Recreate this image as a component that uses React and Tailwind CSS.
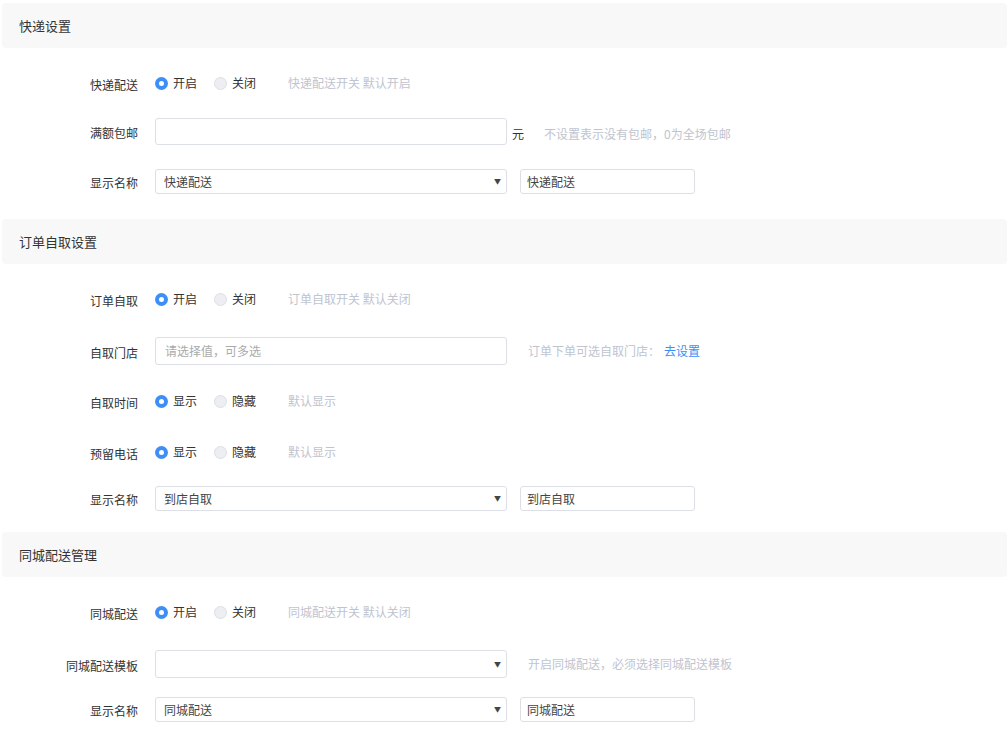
const Radio = ({ checked, label }) => (
    <label className="flex items-center">
        {checked ? (
            <span className="w-[13px] h-[13px] rounded-full bg-[#3e8ef7] flex items-center justify-center">
                <span className="w-[5px] h-[5px] rounded-full bg-white" />
            </span>
        ) : (
            <span className="w-[13px] h-[13px] rounded-full bg-[#eceef2] border border-[#dcdfe6]" />
        )}
        <span className="ml-[5px] text-[#333]">{label}</span>
    </label>
);

const Header = ({ title, className = "" }) => (
    <div className={`h-[45px] bg-[#f8f8f8] rounded-[4px] flex items-center pl-[17px] text-[13px] text-[#333] ${className}`}>
        {title}
    </div>
);

const Row = ({ label, className = "", children }) => (
    <div className={`flex items-center ${className}`}>
        <div className="w-[136px] text-right text-[#333] pt-[3px]">{label}</div>
        <div className="ml-[17px] flex items-center">{children}</div>
    </div>
);

const RadioRow = ({ label, on, off, hint, className }) => (
    <Row label={label} className={`h-[30px] ${className}`}>
        <Radio checked label={on} />
        <div className="ml-[17px]">
            <Radio label={off} />
        </div>
        <span className="ml-[32px] text-[#c0c4cf]">{hint}</span>
    </Row>
);

const Select = ({ value, h = "h-[25px]" }) => (
    <div className={`w-[352px] ${h} border border-[#dcdfe6] rounded-[3px] flex items-center justify-between pl-[8px] pr-[5px] text-[#444]`}>
        <span>{value}</span>
        <span className="text-[7px] text-[#444]">▼</span>
    </div>
);

const TextBox = ({ value }) => (
    <div className="ml-[13px] w-[175px] h-[25px] border border-[#dcdfe6] rounded-[3px] flex items-center pl-[6px] text-[#444]">
        {value}
    </div>
);

const NameRow = ({ value, className }) => (
    <Row label="显示名称" className={className}>
        <Select value={value} />
        <TextBox value={value} />
    </Row>
);

const App = () => {
    return (
        <div className="w-[1008px] h-[743px] bg-white pl-[2px] pr-[1px] text-[12px] overflow-hidden" style={{ fontFamily: '"Noto Sans CJK SC", "Noto Sans", sans-serif' }}>
            <Header title="快递设置" className="mt-[3px]" />
            <RadioRow label="快递配送" on="开启" off="关闭" hint="快递配送开关 默认开启" className="mt-[20px]" />
            <Row label="满额包邮" className="mt-[20px]">
                <div className="w-[352px] h-[27px] border border-[#dcdfe6] rounded-[3px]" />
                <span className="ml-[5px] pt-[5px] text-[#333]">元</span>
                <span className="ml-[20px] pt-[5px] text-[#c0c4cf]">不设置表示没有包邮，0为全场包邮</span>
            </Row>
            <NameRow value="快递配送" className="mt-[24px]" />

            <Header title="订单自取设置" className="mt-[25px]" />
            <RadioRow label="订单自取" on="开启" off="关闭" hint="订单自取开关 默认关闭" className="mt-[20px]" />
            <Row label="自取门店" className="mt-[23px]">
                <div className="w-[352px] h-[28px] border border-[#dcdfe6] rounded-[3px] flex items-center pl-[9px] text-[#aaa]">
                    请选择值，可多选
                </div>
                <span className="ml-[21px] text-[#c0c4cf]">订单下单可选自取门店：</span>
                <span className="ml-[4px] text-[#3e8ef7]">去设置</span>
            </Row>
            <RadioRow label="自取时间" on="显示" off="隐藏" hint="默认显示" className="mt-[21px]" />
            <RadioRow label="预留电话" on="显示" off="隐藏" hint="默认显示" className="mt-[21px]" />
            <NameRow value="到店自取" className="mt-[19px]" />

            <Header title="同城配送管理" className="mt-[21px]" />
            <RadioRow label="同城配送" on="开启" off="关闭" hint="同城配送开关 默认关闭" className="mt-[20px]" />
            <Row label="同城配送模板" className="mt-[23px]">
                <Select value="" h="h-[28px]" />
                <span className="ml-[21px] text-[#c0c4cf]">开启同城配送，必须选择同城配送模板</span>
            </Row>
            <NameRow value="同城配送" className="mt-[19px]" />
        </div>
    );
};

export default App;
